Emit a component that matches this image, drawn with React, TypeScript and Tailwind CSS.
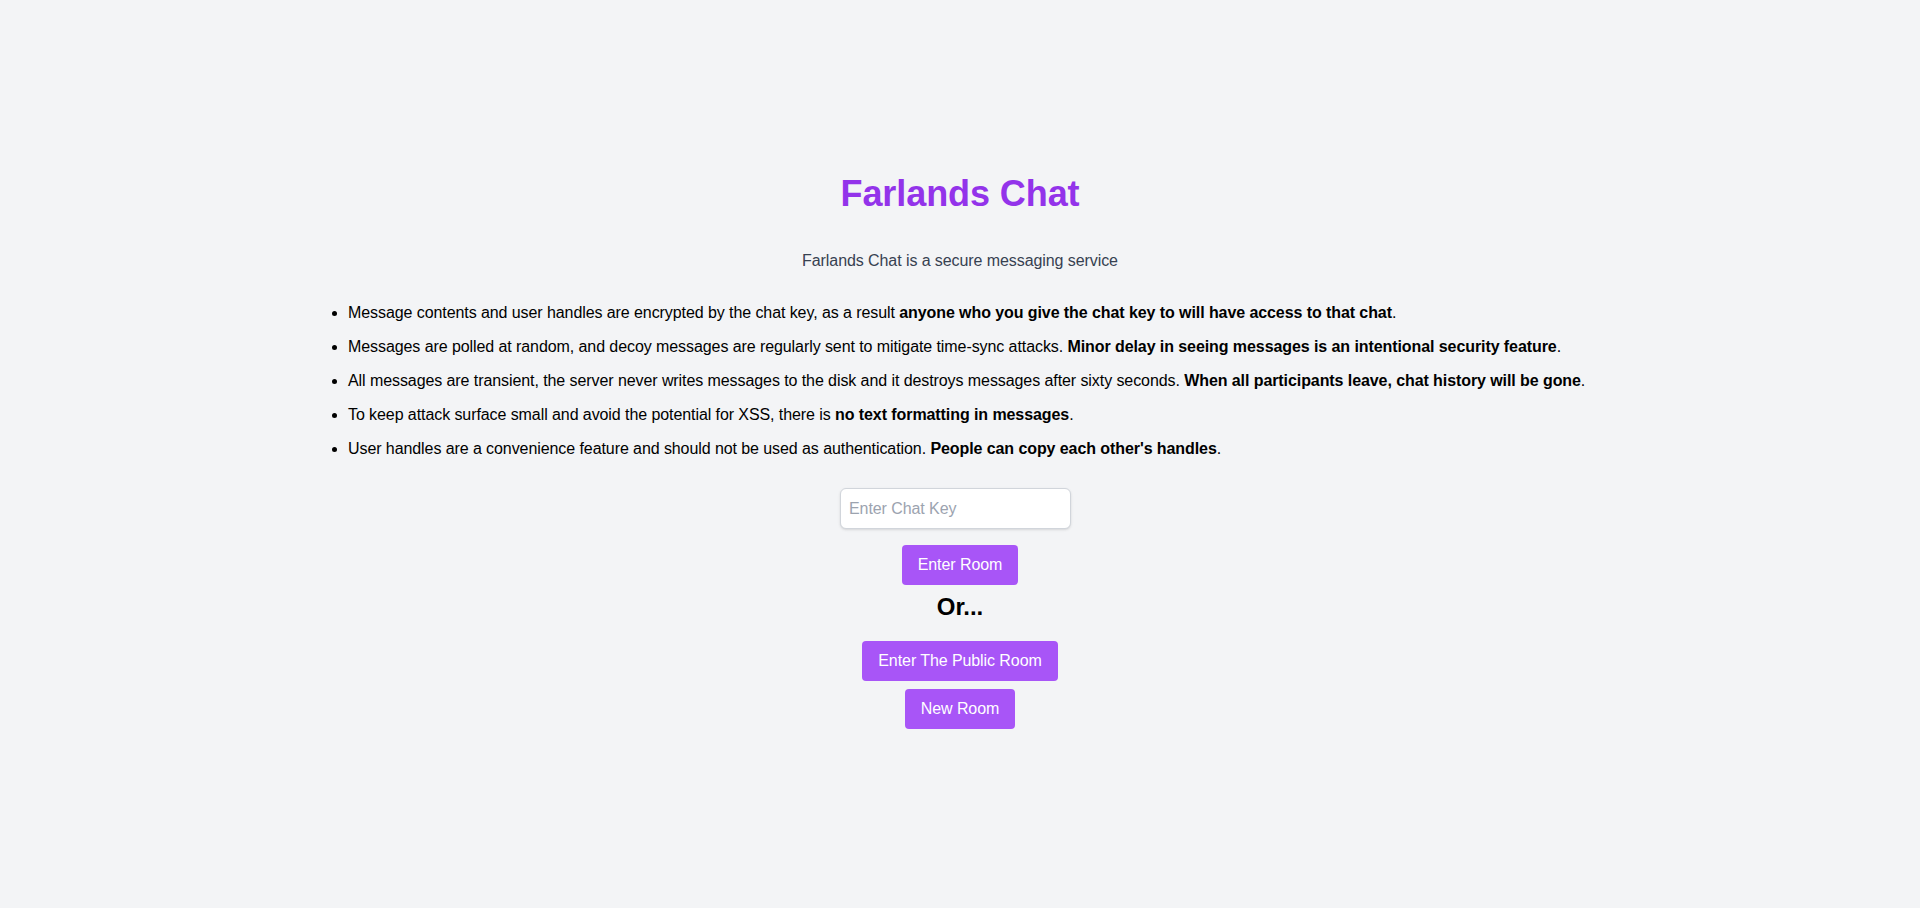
import { useState } from 'react';

const points: { text: string; bold: string }[] = [
  {
    text: 'Message contents and user handles are encrypted by the chat key, as a result ',
    bold: 'anyone who you give the chat key to will have access to that chat',
  },
  {
    text: 'Messages are polled at random, and decoy messages are regularly sent to mitigate time-sync attacks. ',
    bold: 'Minor delay in seeing messages is an intentional security feature',
  },
  {
    text: 'All messages are transient, the server never writes messages to the disk and it destroys messages after sixty seconds. ',
    bold: 'When all participants leave, chat history will be gone',
  },
  {
    text: 'To keep attack surface small and avoid the potential for XSS, there is ',
    bold: 'no text formatting in messages',
  },
  {
    text: 'User handles are a convenience feature and should not be used as authentication. ',
    bold: "People can copy each other's handles",
  },
];

export default function App() {
  const [chatKey, setChatKey] = useState('');

  return (
    <div className="min-h-screen bg-[#f3f4f6] flex flex-col items-center justify-center pb-[5px] tracking-[-0.005em] font-['Liberation_Sans',Arial,sans-serif]">
      <div className="w-full max-w-7xl mx-auto flex flex-col items-center">
        <h1 className="text-4xl font-bold text-[#9333ea] mb-[35px]">Farlands Chat</h1>
        <p className="text-base text-[#374151] mb-7">Farlands Chat is a secure messaging service</p>

        <ul className="w-full list-disc pl-7 space-y-2.5 text-base text-black mb-[27px]">
          {points.map((p, i) => (
            <li key={i}>
              {p.text}
              <strong className="font-bold">{p.bold}</strong>.
            </li>
          ))}
        </ul>

        <input
          type="text"
          value={chatKey}
          onChange={(e) => setChatKey(e.target.value)}
          placeholder="Enter Chat Key"
          className="w-[231px] h-[41px] mr-[9px] px-2 bg-white border border-[#d1d5db] rounded-md shadow-sm text-base placeholder:text-[#9ca3af] focus:outline-none"
        />

        <button className="mt-4 px-4 py-2 bg-[#a855f7] text-white rounded">Enter Room</button>

        <h2 className="mt-1.5 text-2xl font-bold text-black">Or...</h2>

        <button className="mt-[18px] px-4 py-2 bg-[#a855f7] text-white rounded">Enter The Public Room</button>
        <button className="mt-2 px-4 py-2 bg-[#a855f7] text-white rounded">New Room</button>
      </div>
    </div>
  );
}
